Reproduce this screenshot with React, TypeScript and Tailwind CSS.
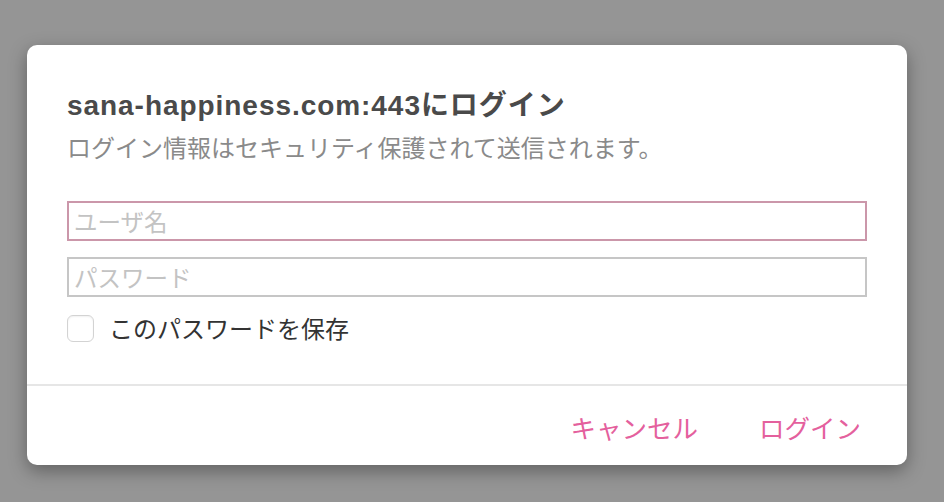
import { useState } from "react";

const font = "font-['Noto_Sans_CJK_JP','Noto_Sans',sans-serif]";

export default function App() {
  const [user, setUser] = useState("");
  const [pass, setPass] = useState("");
  const [save, setSave] = useState(false);

  return (
    <div className={`min-h-[502px] w-full bg-[#959595] pt-[45px] pl-[27px] ${font}`}>
      <div className="flex h-[420px] w-[880px] flex-col rounded-[10px] bg-white shadow-[0_6px_18px_rgba(0,0,0,0.35)]">
        {/* Body */}
        <div className="flex flex-1 flex-col px-[40px] pt-[44px]">
          <h1 className="font-['Liberation_Sans','Noto_Sans_CJK_JP',sans-serif] text-[28px] leading-[34px] font-bold tracking-[0.95px] text-[#4a4a4a]">
            sana-happiness.com:443にログイン
          </h1>
          <p className="mt-[9px] text-[24px] leading-[30px] text-[#8a8a8a]">
            ログイン情報はセキュリティ保護されて送信されます。
          </p>

          <input
            value={user}
            onChange={(e) => setUser(e.target.value)}
            placeholder="ユーザ名"
            className="mt-[39px] h-[40px] w-[800px] border-2 border-[#cb97aa] px-[5px] text-[23.5px] text-[#333] outline-none placeholder:text-[#c3c3c3]"
          />
          <input
            type="password"
            value={pass}
            onChange={(e) => setPass(e.target.value)}
            placeholder="パスワード"
            className="mt-[16px] h-[40px] w-[800px] border-2 border-[#c6c6c6] px-[5px] text-[23.5px] text-[#333] outline-none placeholder:text-[#c3c3c3]"
          />

          <label className="mt-[17px] flex cursor-pointer items-center gap-[15px]">
            <span
              onClick={() => setSave(!save)}
              className="h-[27px] w-[27px] shrink-0 rounded-[6px] border border-[#d3d3d3] bg-white shadow-[inset_0_1px_2px_rgba(0,0,0,0.06)]"
            />
            <span className="text-[24px] leading-[28px] text-[#333333]">このパスワードを保存</span>
          </label>
        </div>

        {/* Footer */}
        <div className="flex h-[81px] items-center justify-end gap-[61px] border-t-2 border-[#e6e6e6] pr-[46px] pt-[2px]">
          <button className="text-[25.5px] leading-[30px] text-[#e4609d]">キャンセル</button>
          <button className="text-[25.5px] leading-[30px] text-[#e4609d]">ログイン</button>
        </div>
      </div>
    </div>
  );
}
